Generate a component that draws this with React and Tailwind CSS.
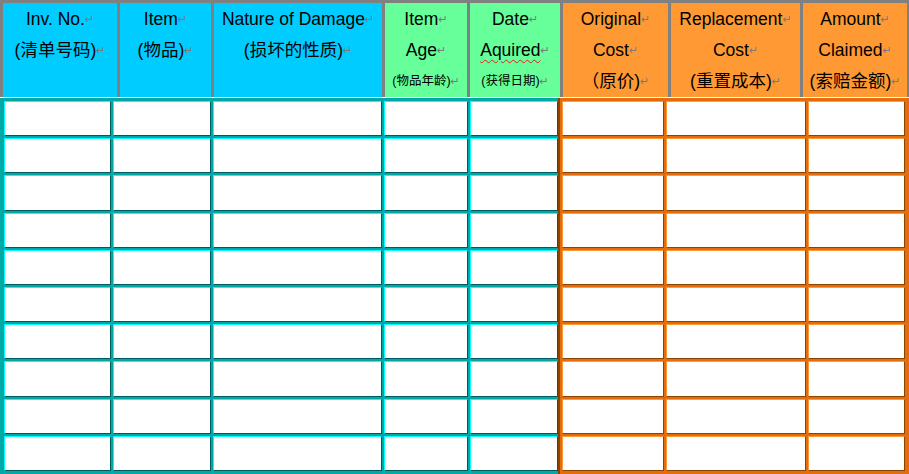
import React from "react";

const headers = [
  { bg: "bg-[#00ccff]", lines: [{ t: "Inv. No." }, { t: "(清单号码)" }] },
  { bg: "bg-[#00ccff]", lines: [{ t: "Item" }, { t: "(物品)" }] },
  { bg: "bg-[#00ccff]", lines: [{ t: "Nature of Damage" }, { t: "(损坏的性质)" }] },
  { bg: "bg-[#66ff99]", lines: [{ t: "Item" }, { t: "Age" }, { t: "(物品年龄)", small: true }] },
  { bg: "bg-[#66ff99]", lines: [{ t: "Date" }, { t: "Aquired", wavy: true }, { t: "(获得日期)", small: true }] },
  { bg: "bg-[#ff9933]", lines: [{ t: "Original" }, { t: "Cost" }, { t: "（原价)" }] },
  { bg: "bg-[#ff9933]", lines: [{ t: "Replacement" }, { t: "Cost" }, { t: "(重置成本)" }] },
  { bg: "bg-[#ff9933]", lines: [{ t: "Amount" }, { t: "Claimed" }, { t: "(索赔金额)" }] },
];

const rows = Array.from({ length: 10 });

const Mark = () => (
  <span className="font-['DejaVu_Sans',sans-serif] text-[11px] leading-none text-[#7a7a7a]">↵</span>
);

const HeaderCell = ({ cell }) => (
  <div className={`${cell.bg} flex flex-col items-center pt-[1px] text-black`}>
    {cell.lines.map((line, i) => (
      <div
        key={i}
        className={`h-[31px] flex items-center whitespace-nowrap ${line.small ? "text-[12.5px]" : "text-[17.5px]"}`}
      >
        <span
          className={`leading-none ${
            line.wavy ? "underline decoration-wavy decoration-[#e02020] decoration-1 underline-offset-[3px]" : ""
          }`}
        >
          {line.t}
        </span>
        <Mark />
      </div>
    ))}
  </div>
);

export default function App() {
  return (
    <div className="w-[909px] h-[474px] overflow-hidden bg-white font-['Liberation_Sans','Noto_Sans_CJK_SC',sans-serif]">
      {/* header */}
      <div className="grid grid-cols-[114px_91px_168px_82px_90px_105px_129px_104px] gap-x-[3px] bg-[#808080] pt-[3px] pl-[3px] pr-[2px] h-[98px] border-b border-white">
        {headers.map((h, i) => (
          <HeaderCell key={i} cell={h} />
        ))}
      </div>

      {/* body */}
      <div className="flex h-[376px]">
        <div className="w-[558px] bg-[#00a8a8] grid grid-cols-[107px_98px_169px_84px_88px] grid-rows-[repeat(10,minmax(0,1fr))] gap-[2px] pl-[4px] pt-[3px] pb-[3px]">
          {rows.map((_, r) =>
            [0, 1, 2, 3, 4].map((c) => (
              <div
                key={`${r}-${c}`}
                className="bg-white border border-t-[#00ffff] border-l-[#00ffff] border-b-[#005c5c] border-r-[#005c5c]"
              />
            ))
          )}
        </div>
        <div className="w-[351px] bg-[#e46c0a] border-l-2 border-l-[#8a4300] grid grid-cols-[102px_140px_97px] grid-rows-[repeat(10,minmax(0,1fr))] gap-[2px] pl-[2px] pr-[4px] pt-[3px] pb-[3px]">
          {rows.map((_, r) =>
            [0, 1, 2].map((c) => (
              <div
                key={`${r}-${c}`}
                className="bg-white border border-t-[#ff9a3c] border-l-[#ff9a3c] border-b-[#8a4300] border-r-[#8a4300]"
              />
            ))
          )}
        </div>
      </div>
    </div>
  );
}
